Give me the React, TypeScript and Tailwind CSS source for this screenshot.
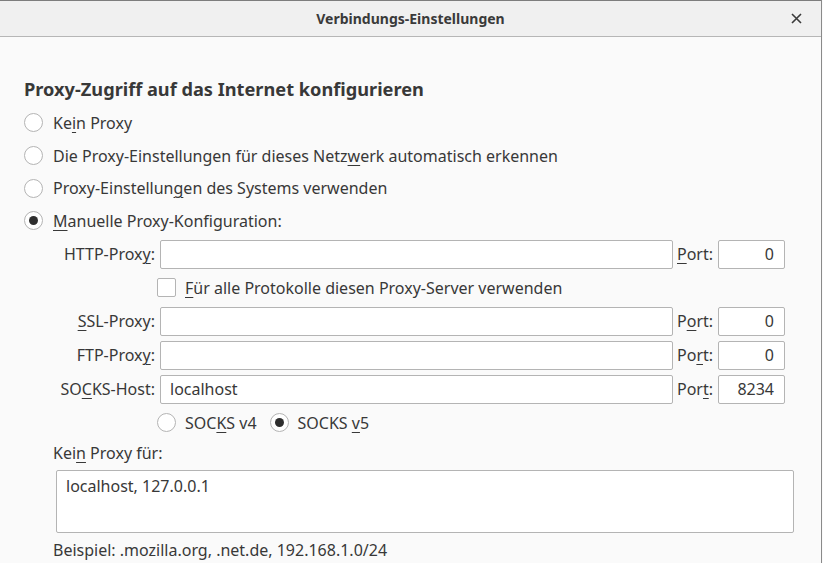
import React from 'react'

const font = { fontFamily: '"Noto Sans", "Open Sans", sans-serif' }

function Radio({ checked }: { checked?: boolean }) {
  return (
    <span className="flex h-[19px] w-[19px] shrink-0 items-center justify-center rounded-full border border-[#b4b4b4] bg-white">
      {checked && <span className="h-[9px] w-[9px] rounded-full bg-[#2e2e2e]" />}
    </span>
  )
}

function Checkbox() {
  return <span className="block h-[19px] w-[19px] shrink-0 rounded-[2px] border border-[#b4b4b4] bg-white" />
}

// label with underlined access key
function K({ text, k }: { text: string; k: number }) {
  return (
    <span className="whitespace-pre">
      {text.slice(0, k)}
      <span className="underline decoration-1 underline-offset-[3px]">{text[k]}</span>
      {text.slice(k + 1)}
    </span>
  )
}

function RadioRow({ text, k, checked, h = 'h-[33px]' }: { text: string; k: number; checked?: boolean; h?: string }) {
  return (
    <div className={`flex ${h} items-center gap-[10px]`}>
      <Radio checked={checked} />
      <K text={text} k={k} />
    </div>
  )
}

function ProxyRow({
  label,
  lk,
  pk,
  value,
  port,
}: {
  label: string
  lk: number
  pk: number
  value?: string
  port: string
}) {
  return (
    <div className="flex h-[34px] items-center">
      <div className="w-[102px] text-right">
        <K text={label} k={lk} />
      </div>
      <div className="ml-[5px] flex h-[29px] w-[513px] items-center rounded-[2px] border border-[#b4b4b4] bg-white px-[9px]">
        {value}
      </div>
      <div className="w-[45px] pl-[4px]">
        <K text="Port:" k={pk} />
      </div>
      <div className="flex h-[29px] w-[67px] items-center justify-end rounded-[2px] border border-[#b4b4b4] bg-white px-[10px]">
        {port}
      </div>
    </div>
  )
}

export default function App() {
  return (
    <div className="h-[563px] w-[823px] overflow-hidden bg-[#fafafa] text-[16px] text-[#383838]" style={font}>
      <div className="h-full w-[822px] border-r border-[#8a8a8a]">
        <div className="relative flex h-[37px] items-center justify-center border-t border-b border-t-[#7d7d7d] border-b-[#b6b6b6] bg-[#f0f0f0]">
          <span className="text-[14px] font-bold text-[#3a3a3a]">Verbindungs-Einstellungen</span>
          <svg
            className="absolute right-[19px] top-[12px]"
            width="11"
            height="11"
            viewBox="0 0 11 11"
            fill="none"
            stroke="#3a3a3a"
            strokeWidth="1.6"
          >
            <path d="M1 1l9 9M10 1l-9 9" />
          </svg>
        </div>

        <div className="pl-6 pt-[36px]">
          <div className="flex h-[33px] items-center text-[18.2px] font-bold">
            Proxy-Zugriff auf das Internet konfigurieren
          </div>
          <RadioRow text="Kein Proxy" k={2} />
          <RadioRow text="Die Proxy-Einstellungen für dieses Netzwerk automatisch erkennen" k={39} />
          <RadioRow text="Proxy-Einstellungen des Systems verwenden" k={16} h="h-[32px]" />
          <RadioRow text="Manuelle Proxy-Konfiguration:" k={0} checked />
        </div>

        <div className="pl-[53px]">
          <ProxyRow label="HTTP-Proxy:" lk={9} pk={0} port="0" />
          <div className="flex h-[33px] items-center gap-[9px] pl-[104px]">
            <Checkbox />
            <K text="Für alle Protokolle diesen Proxy-Server verwenden" k={0} />
          </div>
          <ProxyRow label="SSL-Proxy:" lk={0} pk={1} port="0" />
          <ProxyRow label="FTP-Proxy:" lk={8} pk={2} port="0" />
          <ProxyRow label="SOCKS-Host:" lk={2} pk={3} value="localhost" port="8234" />
          <div className="flex h-[33px] items-center pl-[104px]">
            <Radio />
            <span className="ml-[9px]">
              <K text="SOCKS v4" k={3} />
            </span>
            <span className="ml-[13px]">
              <Radio checked />
            </span>
            <span className="ml-[9px]">
              <K text="SOCKS v5" k={6} />
            </span>
          </div>
          <div className="flex h-[28px] items-center">
            <K text="Kein Proxy für:" k={3} />
          </div>
          <div className="ml-[3px] mt-[3px] h-[63px] w-[738px] rounded-[2px] border border-[#b4b4b4] bg-white px-[9px] pt-[3px]">
            localhost, 127.0.0.1
          </div>
          <div className="flex h-[33px] items-center">Beispiel: .mozilla.org, .net.de, 192.168.1.0/24</div>
        </div>
      </div>
    </div>
  )
}
